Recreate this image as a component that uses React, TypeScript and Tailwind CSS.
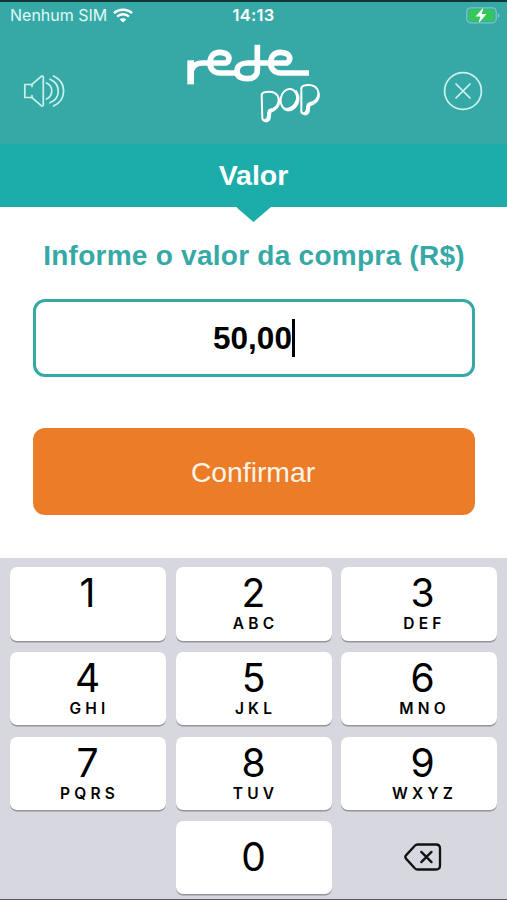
import React from 'react';

interface KeyProps {
  digit: string;
  letters?: string;
}

const KEYS: KeyProps[] = [
  { digit: '1' },
  { digit: '2', letters: 'ABC' },
  { digit: '3', letters: 'DEF' },
  { digit: '4', letters: 'GHI' },
  { digit: '5', letters: 'JKL' },
  { digit: '6', letters: 'MNO' },
  { digit: '7', letters: 'PQRS' },
  { digit: '8', letters: 'TUV' },
  { digit: '9', letters: 'WXYZ' },
];

const WifiIcon = () => (
  <svg width="20" height="15" viewBox="0 0 20 15" fill="none" stroke="white" strokeWidth="2.4">
    <path d="M1 5.2C6 0.6 14 0.6 19 5.2" />
    <path d="M4.1 8.6C7.4 5.5 12.6 5.5 15.9 8.6" />
    <path d="M10 14.6 6.7 11.4C8.5 9.7 11.5 9.7 13.3 11.4Z" fill="white" stroke="none" />
  </svg>
);

const BatteryIcon = () => (
  <svg width="34" height="17" viewBox="0 0 34 17" fill="none">
    <rect x="0.8" y="0.8" width="29.4" height="15" rx="4" stroke="#7cc5c8" strokeWidth="1.3" />
    <rect x="2.6" y="2.6" width="25.6" height="11.4" rx="2.3" fill="#35c759" />
    <path d="M31.8 6v5c1.2-.5 1.7-1.4 1.7-2.5S33 6.5 31.8 6Z" fill="#7cc5c8" />
    <path d="M17.5 0.5 9.5 9.4h4.8l-1.7 6.8 8-9.100h-4.900Z" fill="white" stroke="#35c759" strokeWidth="0.8" paintOrder="stroke" />
  </svg>
);

const SpeakerIcon = () => (
  <svg width="42" height="34" viewBox="0 0 42 34" fill="none" stroke="#c9f2ee" strokeWidth="1.7" strokeLinecap="round" strokeLinejoin="round">
    <path d="M9 10.5H1.8V23.5H9" />
    <path d="M9 12.5V10.3L18.2 2.3C19.2 1.7 20.3 2 20.3 3.3V30.7C20.3 32 19.2 32.3 18.2 31.7L9 23.7V21.5" />
    <path d="M23.500 9C30.500 12 30.500 22 23.500 25" />
    <path d="M27 5.200C38 10 38 24 27 28.800" />
    <path d="M30.500 2C44 8 44 26 30.500 32" />
  </svg>
);

const CloseIcon = () => (
  <svg width="40" height="40" viewBox="0 0 40 40" fill="none" stroke="#d0f3ef" strokeWidth="1.7" strokeLinecap="round">
    <circle cx="20" cy="20" r="18.400" />
    <path d="M13 13 27 27M27 13 13 27" />
  </svg>
);

const Logo = () => (
  <svg width="137" height="82" viewBox="45 130 411 246" fill="none" stroke="white" aria-label="rede pop">
    {/* rede */}
    <g strokeWidth="17" strokeLinejoin="round">
      <path d="M62 254V182" strokeWidth="20" />
      <path d="M66 210C70 196 80 190 98 190H168C184 182 180 158 149 158C131 158 120 170 120 189C120 209 132 220 150 220H202" />
      <path d="M262 135V211C262 228 250 237 232 237C212 237 201 229 201 214C201 199 214 190 232 190H350C366 182 362 158 331 158C313 158 302 170 302 189C302 209 314 220 332 220H417" />
    </g>
    {/* pop */}
    <g strokeWidth="6" strokeLinejoin="round">
      <path d="M275 287C275 281 280 278 288 277C308 273 324 281 326 298C328 315 317 327 301 330L296 333L295 356C293 366 279 366 277 356Z" />
      <ellipse cx="357" cy="300" rx="25" ry="32" transform="rotate(8 357 300)" />
      <path d="M335 317C340 330 357 328 369 317C380 305 384 288 378 272C394 290 387 318 371 329C356 338 340 332 335 317Z" fill="white" strokeWidth="3" />
      <path d="M394 267C394 261 399 258 407 257C428 253 443 262 445 279C447 295 435 308 418 311L413 314L412 335C410 345 395 344 394 335Z" />
      <path d="M293 339 300 329C315 326 327 315 327 297C333 318 320 332 303 337L300 358C297 369 283 369 278 361C289 361 293 354 293 339Z" fill="white" strokeWidth="3" />
      <path d="M410 319 417 311C434 308 446 296 446 277C453 299 439 313 420 318L417 338C413 348 402 348 396 340C406 340 410 333 410 319Z" fill="white" strokeWidth="3" />
    </g>
  </svg>
);

const BackspaceIcon = () => (
  <svg width="38" height="28" viewBox="0 0 38 28" fill="none" stroke="#111" strokeWidth="2.300" strokeLinecap="round" strokeLinejoin="round">
    <path d="M13.5 1.500H32C34.600 1.500 36 3 36 5.500V22.500C36 25 34.600 26.500 32 26.500H13.500C12.400 26.500 11.600 26.100 10.800 25.300L2.200 15.900C1.100 14.700 1.100 13.300 2.200 12.100L10.800 2.700C11.600 1.900 12.400 1.500 13.500 1.500Z" />
    <path d="M17.300 8.900 27.500 19.100M27.500 8.900 17.300 19.100" />
  </svg>
);

const Key = ({ digit, letters }: KeyProps) => (
  <button className="flex h-[73.5px] flex-col items-center rounded-[7px] bg-white pt-[5px] text-black shadow-[0_1.5px_0_#94959b] [&:nth-child(3n)]:pl-[7px] [&:nth-child(3n+1)]:pr-[1px]">
    <span className="text-[39px] leading-[42px]">{digit}</span>
    {letters && (
      <span className="mt-0.5 pl-[4px] text-[15.5px] leading-[16px] font-semibold tracking-[4.2px]">{letters}</span>
    )}
  </button>
);

export default function App() {
  return (
    <div className="flex h-[900px] w-[507px] flex-col overflow-hidden border-t-2 border-b border-t-[#123635] border-b-[#55565a] bg-white font-['Liberation_Sans',sans-serif]">
      <header className="h-[142px] bg-[#36a9a6]">
        <div className="grid h-[26px] grid-cols-3 items-center pr-[7px] pl-[10px] font-[Inter,sans-serif] text-white">
          <div className="flex items-center gap-[6px] text-[16px] whitespace-nowrap text-[#e0faf7]">
            <span>Nenhum SIM</span>
            <WifiIcon />
          </div>
          <div className="pr-[3px] text-center text-[16.5px] font-semibold tracking-[0.3px]">14:13</div>
          <div className="flex justify-end">
            <BatteryIcon />
          </div>
        </div>
        <div className="flex items-start justify-between pr-[24px] pl-[23px]">
          <div className="mt-[46px]">
            <SpeakerIcon />
          </div>
          <div className="mt-[15px] pr-[1px]">
            <Logo />
          </div>
          <div className="mt-[43px]">
            <CloseIcon />
          </div>
        </div>
      </header>

      <div className="relative flex h-[63px] items-center justify-center bg-[#1caca9]">
        <h1 className="pb-px text-[28.5px] font-bold text-white">Valor</h1>
        <div className="absolute top-full left-1/2 h-[15px] w-[35px] -translate-x-1/2 bg-[#1caca9] [clip-path:polygon(0_0,100%_0,50%_100%)]" />
      </div>

      <main className="flex h-[351px] flex-col pt-[33px] pr-[32px] pl-[33px]">
        <h2 className="text-center text-[28px] leading-[32px] font-bold tracking-[0.26px] whitespace-nowrap text-[#36a9a6]">
          Informe o valor da compra (R$)
        </h2>
        <div className="mt-[27px] flex h-[78px] items-center justify-center rounded-[12px] border-[3px] border-[#36a9a6]">
          <span className="pt-[2px] text-[31.5px] font-bold text-black">50,00</span>
          <span className="h-[38px] w-[3px] bg-black" />
        </div>
        <button className="mt-[51px] h-[87px] shrink-0 rounded-[12px] bg-[#ec7d28] pt-[2px] pr-[2px] text-[28.3px] text-[#fff4e8]">
          Confirmar
        </button>
      </main>

      <div className="grid flex-1 grid-cols-3 content-start gap-x-[9.5px] gap-y-[11.3px] bg-[#d6d7df] px-[10px] pt-[9px] font-[Inter,sans-serif]">
        {KEYS.map((key) => (
          <Key key={key.digit} digit={key.digit} letters={key.letters} />
        ))}
        <button className="col-start-2 h-[72.5px] rounded-[7px] bg-white text-[39px] text-black shadow-[0_1.5px_0_#94959b]">
          0
        </button>
        <button className="flex items-center justify-center pb-[2px] pl-[8px]">
          <BackspaceIcon />
        </button>
      </div>
    </div>
  );
}
